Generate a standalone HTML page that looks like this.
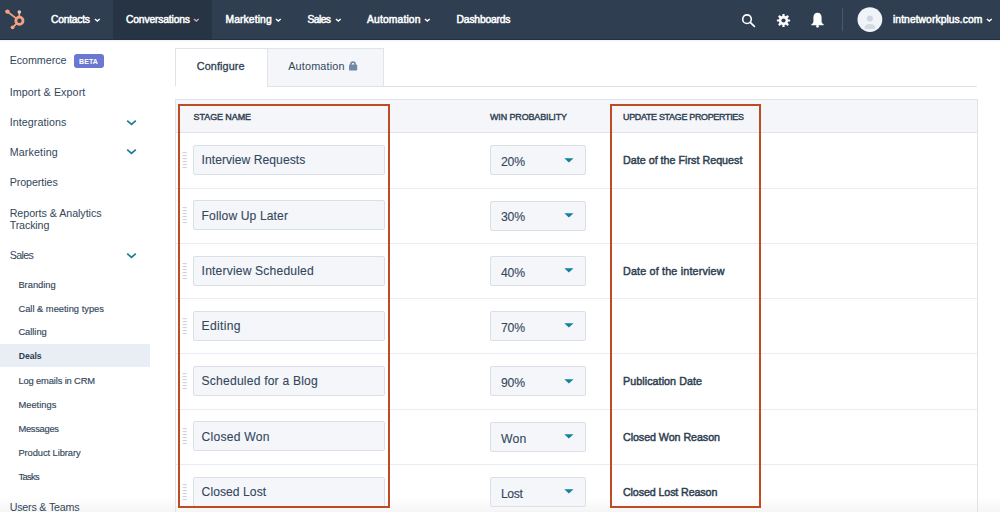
<!DOCTYPE html>
<html><head><meta charset="utf-8">
<style>
*{margin:0;padding:0;box-sizing:border-box}
html,body{width:1000px;height:512px;overflow:hidden;background:#fff;font-family:"Liberation Sans",sans-serif;color:#33475b;position:relative}
.a{position:absolute;white-space:nowrap}
.blk{position:absolute}
</style></head><body>
<div class="blk" style="left:0;top:497px;width:1000px;height:15px;background:linear-gradient(rgba(235,235,235,0),rgba(235,235,235,0.5))"></div>
<div class="blk" style="left:0;top:0;width:1000px;height:40px;background:#2f3f51"></div>
<div class="blk" style="left:113px;top:0;width:99px;height:40px;background:#273444"></div>
<div class="blk" style="left:0;top:39px;width:1000px;height:1px;background:#243140"></div>
<div class="blk" style="left:0;top:40px;width:1000px;height:2px;background:linear-gradient(rgba(0,0,0,0.06),rgba(0,0,0,0))"></div>
<svg class="blk" style="left:0;top:0" width="40" height="40" viewBox="0 0 40 40">
<g stroke="#f4a184" fill="none" stroke-linecap="round">
<circle cx="19.4" cy="20.8" r="3.6" stroke-width="2.8"/>
<line x1="16.6" y1="18.6" x2="7.5" y2="11.7" stroke-width="1.7"/>
<line x1="19.3" y1="16.6" x2="19.3" y2="12.2" stroke-width="1.7"/>
<line x1="16.8" y1="23.4" x2="12.7" y2="27.3" stroke-width="1.7"/>
</g>
<g fill="#f4a184"><circle cx="7.4" cy="11.6" r="2.2"/><circle cx="19.3" cy="12" r="1.8" fill="#f5c5ab"/><circle cx="12.6" cy="27.3" r="1.9"/></g>
</svg>
<div class="a" style="left:51.00px;top:14px;font-size:10.3px;line-height:11px;color:#fff;letter-spacing:-0.242px;-webkit-text-stroke:0.5px #fff;">Contacts</div>
<svg class="blk" style="left:94.2px;top:18px" width="7" height="5" viewBox="0 0 7 5"><path d="M0.9 0.9 L3.3 3.1 L5.7 0.9" stroke="#fff" stroke-width="1.35" fill="none"/></svg>
<div class="a" style="left:126.00px;top:14px;font-size:10.3px;line-height:11px;color:#fff;letter-spacing:-0.153px;-webkit-text-stroke:0.5px #fff;">Conversations</div>
<svg class="blk" style="left:193.3px;top:18px" width="7" height="5" viewBox="0 0 7 5"><path d="M0.9 0.9 L3.3 3.1 L5.7 0.9" stroke="#d4a6b6" stroke-width="1.35" fill="none"/></svg>
<div class="a" style="left:225.50px;top:14px;font-size:10.3px;line-height:11px;color:#fff;letter-spacing:0.121px;-webkit-text-stroke:0.5px #fff;">Marketing</div>
<svg class="blk" style="left:274.8px;top:18px" width="7" height="5" viewBox="0 0 7 5"><path d="M0.9 0.9 L3.3 3.1 L5.7 0.9" stroke="#fff" stroke-width="1.35" fill="none"/></svg>
<div class="a" style="left:307.50px;top:14px;font-size:10.3px;line-height:11px;color:#fff;letter-spacing:-0.564px;-webkit-text-stroke:0.5px #fff;">Sales</div>
<svg class="blk" style="left:334.5px;top:18px" width="7" height="5" viewBox="0 0 7 5"><path d="M0.9 0.9 L3.3 3.1 L5.7 0.9" stroke="#fff" stroke-width="1.35" fill="none"/></svg>
<div class="a" style="left:367.00px;top:14px;font-size:10.3px;line-height:11px;color:#fff;letter-spacing:0.152px;-webkit-text-stroke:0.5px #fff;">Automation</div>
<svg class="blk" style="left:423.8px;top:18px" width="7" height="5" viewBox="0 0 7 5"><path d="M0.9 0.9 L3.3 3.1 L5.7 0.9" stroke="#fff" stroke-width="1.35" fill="none"/></svg>
<div class="a" style="left:456.60px;top:14px;font-size:10.3px;line-height:11px;color:#fff;letter-spacing:-0.181px;-webkit-text-stroke:0.5px #fff;">Dashboards</div>
<svg class="blk" style="left:740px;top:13px" width="18" height="16" viewBox="0 0 18 16">
<circle cx="7" cy="6.2" r="4.3" stroke="#fff" stroke-width="1.6" fill="none"/>
<line x1="10.2" y1="9.4" x2="14.4" y2="13.4" stroke="#fff" stroke-width="1.7" stroke-linecap="round"/></svg>
<svg class="blk" style="left:775.8px;top:12.8px" width="16" height="16" viewBox="0 0 16 16">
<g fill="#fff">
<circle cx="7.5" cy="7.5" r="4.7"/>
<rect x="6.4" y="0.9" width="2.2" height="13.2" rx="0.4"/>
<rect x="6.4" y="0.9" width="2.2" height="13.2" rx="0.4" transform="rotate(45 7.5 7.5)"/>
<rect x="6.4" y="0.9" width="2.2" height="13.2" rx="0.4" transform="rotate(90 7.5 7.5)"/>
<rect x="6.4" y="0.9" width="2.2" height="13.2" rx="0.4" transform="rotate(135 7.5 7.5)"/>
</g><circle cx="7.5" cy="7.5" r="2.1" fill="#2f3f51"/></svg>
<svg class="blk" style="left:809px;top:11px" width="17" height="18" viewBox="0 0 17 18">
<path d="M4.4 6.5 C4.4 3.6 6 1.8 8.5 1.8 C11 1.8 12.6 3.6 12.6 6.5 L12.6 10.4 C12.6 11.8 13.6 12.6 14.6 13.2 L14.6 14.2 L2.4 14.2 L2.4 13.2 C3.4 12.6 4.4 11.8 4.4 10.4 Z" fill="#fff"/>
<circle cx="8.5" cy="15.3" r="1.4" fill="#fff"/></svg>
<div class="blk" style="left:842px;top:8px;width:1px;height:23px;background:#48596b"></div>
<svg class="blk" style="left:857px;top:7px" width="26" height="26" viewBox="0 0 26 26">
<circle cx="12.9" cy="12.6" r="12.4" fill="#f0f3f7"/>
<circle cx="12.9" cy="11.6" r="3.0" fill="#cdd5de"/>
<path d="M7.2 21.4 C7.6 18.6 9.8 17.1 12.9 17.1 C16 17.1 18.2 18.6 18.6 21.4 Q12.9 22.4 7.2 21.4 Z" fill="#d3dae2"/></svg>
<div class="a" style="left:893.00px;top:14px;font-size:10.3px;line-height:11px;color:#fff;letter-spacing:0.071px;-webkit-text-stroke:0.5px #fff;">intnetworkplus.com</div>
<svg class="blk" style="left:985.5px;top:18px" width="7" height="5" viewBox="0 0 7 5"><path d="M0.9 0.9 L3.3 3.1 L5.7 0.9" stroke="#fff" stroke-width="1.35" fill="none"/></svg>
<div class="a" style="left:9.70px;top:54px;font-size:10.72px;line-height:12px;color:#33475b;letter-spacing:-0.054px;">Ecommerce</div>
<div class="a" style="left:9.70px;top:86px;font-size:10.72px;line-height:12px;color:#33475b;letter-spacing:0.079px;">Import &amp; Export</div>
<div class="a" style="left:9.70px;top:116px;font-size:10.72px;line-height:12px;color:#33475b;letter-spacing:0.067px;">Integrations</div>
<div class="a" style="left:9.70px;top:146px;font-size:10.72px;line-height:12px;color:#33475b;letter-spacing:0.130px;">Marketing</div>
<div class="a" style="left:9.70px;top:176px;font-size:10.72px;line-height:12px;color:#33475b;letter-spacing:-0.087px;">Properties</div>
<div class="a" style="left:9.70px;top:207px;font-size:10.72px;line-height:12px;color:#33475b;letter-spacing:-0.058px;">Reports &amp; Analytics</div>
<div class="a" style="left:9.70px;top:219px;font-size:10.72px;line-height:12px;color:#33475b;letter-spacing:-0.148px;">Tracking</div>
<div class="a" style="left:9.70px;top:249px;font-size:10.72px;line-height:12px;color:#33475b;letter-spacing:-0.650px;">Sales</div>
<div class="a" style="left:9.70px;top:501px;font-size:10.72px;line-height:12px;color:#33475b;letter-spacing:-0.214px;">Users &amp; Teams</div>
<div class="blk" style="left:73.5px;top:54px;width:30.5px;height:14px;background:#6a78d1;border-radius:3px"></div>
<div class="a" style="left:79.00px;top:58px;font-size:7.0px;line-height:7px;color:#fff;font-weight:bold;letter-spacing:0.117px;">BETA</div>
<svg class="blk" style="left:125px;top:118.7px" width="13" height="8" viewBox="0 0 13 8"><path d="M2.2 1.6 L6.5 5.4 L10.8 1.6" stroke="#1d7f92" stroke-width="1.7" fill="none"/></svg>
<svg class="blk" style="left:125px;top:148.0px" width="13" height="8" viewBox="0 0 13 8"><path d="M2.2 1.6 L6.5 5.4 L10.8 1.6" stroke="#1d7f92" stroke-width="1.7" fill="none"/></svg>
<svg class="blk" style="left:125px;top:251.8px" width="13" height="8" viewBox="0 0 13 8"><path d="M2.2 1.6 L6.5 5.4 L10.8 1.6" stroke="#1d7f92" stroke-width="1.7" fill="none"/></svg>
<div class="blk" style="left:0;top:344.2px;width:150px;height:23.3px;background:#e9edf5"></div>
<div class="a" style="left:18.40px;top:280px;font-size:9.33px;line-height:10px;color:#33475b;letter-spacing:-0.001px;-webkit-text-stroke:0.15px #33475b;">Branding</div>
<div class="a" style="left:18.40px;top:304px;font-size:9.33px;line-height:10px;color:#33475b;letter-spacing:-0.001px;-webkit-text-stroke:0.15px #33475b;">Call &amp; meeting types</div>
<div class="a" style="left:18.40px;top:327px;font-size:9.33px;line-height:10px;color:#33475b;letter-spacing:-0.023px;-webkit-text-stroke:0.15px #33475b;">Calling</div>
<div class="a" style="left:18.40px;top:376px;font-size:9.33px;line-height:10px;color:#33475b;letter-spacing:-0.132px;-webkit-text-stroke:0.15px #33475b;">Log emails in CRM</div>
<div class="a" style="left:18.40px;top:400px;font-size:9.33px;line-height:10px;color:#33475b;letter-spacing:0.019px;-webkit-text-stroke:0.15px #33475b;">Meetings</div>
<div class="a" style="left:18.40px;top:424px;font-size:9.33px;line-height:10px;color:#33475b;letter-spacing:-0.275px;-webkit-text-stroke:0.15px #33475b;">Messages</div>
<div class="a" style="left:18.40px;top:448px;font-size:9.33px;line-height:10px;color:#33475b;letter-spacing:-0.074px;-webkit-text-stroke:0.15px #33475b;">Product Library</div>
<div class="a" style="left:18.40px;top:472px;font-size:9.33px;line-height:10px;color:#33475b;letter-spacing:-0.619px;-webkit-text-stroke:0.15px #33475b;">Tasks</div>
<div class="a" style="left:18.70px;top:351px;font-size:8.66px;line-height:10px;color:#2d3e50;font-weight:bold;letter-spacing:-0.054px;">Deals</div>
<div class="blk" style="left:175px;top:48px;width:93px;height:38px;background:#fff;border:1px solid #e0e4e9;border-bottom:none"></div>
<div class="blk" style="left:267px;top:48px;width:117px;height:38px;background:#f4f6f9;border:1px solid #e0e4e9;border-bottom:none"></div>
<div class="blk" style="left:267px;top:85.5px;width:710px;height:1px;background:#e0e4e9"></div>
<div class="a" style="left:196.80px;top:60px;font-size:10.87px;line-height:12px;color:#2d3e50;letter-spacing:0.076px;-webkit-text-stroke:0.3px #2d3e50;">Configure</div>
<div class="a" style="left:288.20px;top:60px;font-size:10.87px;line-height:12px;color:#33475b;letter-spacing:0.154px;">Automation</div>
<svg class="blk" style="left:348.3px;top:60px" width="10" height="11" viewBox="0 0 10 11">
<path d="M2.9 5 L2.9 3.8 C2.9 1.5 7.1 1.5 7.1 3.8 L7.1 5" stroke="#7089a6" stroke-width="1.6" fill="none"/>
<rect x="1" y="4.5" width="8.2" height="6" rx="0.9" fill="#7089a6"/></svg>
<div class="blk" style="left:175px;top:99px;width:803px;height:420px;border:1px solid #e0e4e9"></div>
<div class="blk" style="left:176px;top:100px;width:801px;height:32.5px;background:#f5f6fa;border-bottom:1px solid #e0e4e9"></div>
<div class="a" style="left:193.60px;top:112px;font-size:8.93px;line-height:10px;color:#2d3e50;letter-spacing:-0.049px;-webkit-text-stroke:0.4px #2d3e50;">STAGE NAME</div>
<div class="a" style="left:490.00px;top:112px;font-size:8.93px;line-height:10px;color:#2d3e50;letter-spacing:-0.098px;-webkit-text-stroke:0.4px #2d3e50;">WIN PROBABILITY</div>
<div class="a" style="left:623.00px;top:112px;font-size:8.93px;line-height:10px;color:#2d3e50;letter-spacing:-0.294px;-webkit-text-stroke:0.4px #2d3e50;">UPDATE STAGE PROPERTIES</div>
<div class="blk" style="left:176px;top:187.50px;width:801px;height:1px;background:#e9edf1"></div>
<div class="blk" style="left:193px;top:145.00px;width:191.5px;height:30px;background:#f4f6fa;border:1px solid #dbe0e7;border-radius:2px"></div>
<div class="blk" style="left:490px;top:145.30px;width:96px;height:30px;background:#f4f6fa;border:1px solid #dbe0e7;border-radius:2px"></div>
<div class="a" style="left:201.60px;top:153px;font-size:12.12px;line-height:14px;color:#33475b;letter-spacing:0.038px;-webkit-text-stroke:0.1px #33475b;">Interview Requests</div>
<div class="a" style="left:500.90px;top:155px;font-size:12.22px;line-height:14px;color:#33475b;letter-spacing:-0.166px;-webkit-text-stroke:0.1px #33475b;">20%</div>
<svg class="blk" style="left:564px;top:157.60px" width="10" height="6" viewBox="0 0 10 6"><path d="M0.3 0.2 L9.5 0.2 L4.9 4.5 Z" fill="#12829a"/></svg>
<svg class="blk" style="left:181.5px;top:152.00px" width="6" height="17" viewBox="0 0 6 17"><g fill="#cad2db"><rect x="0.6" y="0.10" width="4.2" height="1.1"/><rect x="0.6" y="3.08" width="4.2" height="1.1"/><rect x="0.6" y="6.06" width="4.2" height="1.1"/><rect x="0.6" y="9.04" width="4.2" height="1.1"/><rect x="0.6" y="12.02" width="4.2" height="1.1"/><rect x="0.6" y="15.00" width="4.2" height="1.1"/></g></svg>
<div class="a" style="left:623.00px;top:154px;font-size:10.74px;line-height:12px;color:#2d3e50;letter-spacing:0.003px;-webkit-text-stroke:0.45px #2d3e50;">Date of the First Request</div>
<div class="blk" style="left:176px;top:242.78px;width:801px;height:1px;background:#e9edf1"></div>
<div class="blk" style="left:193px;top:200.28px;width:191.5px;height:30px;background:#f4f6fa;border:1px solid #dbe0e7;border-radius:2px"></div>
<div class="blk" style="left:490px;top:200.58px;width:96px;height:30px;background:#f4f6fa;border:1px solid #dbe0e7;border-radius:2px"></div>
<div class="a" style="left:201.60px;top:209px;font-size:12.12px;line-height:14px;color:#33475b;letter-spacing:0.109px;-webkit-text-stroke:0.1px #33475b;">Follow Up Later</div>
<div class="a" style="left:500.90px;top:210px;font-size:12.22px;line-height:14px;color:#33475b;letter-spacing:-0.166px;-webkit-text-stroke:0.1px #33475b;">30%</div>
<svg class="blk" style="left:564px;top:212.88px" width="10" height="6" viewBox="0 0 10 6"><path d="M0.3 0.2 L9.5 0.2 L4.9 4.5 Z" fill="#12829a"/></svg>
<svg class="blk" style="left:181.5px;top:207.28px" width="6" height="17" viewBox="0 0 6 17"><g fill="#cad2db"><rect x="0.6" y="0.10" width="4.2" height="1.1"/><rect x="0.6" y="3.08" width="4.2" height="1.1"/><rect x="0.6" y="6.06" width="4.2" height="1.1"/><rect x="0.6" y="9.04" width="4.2" height="1.1"/><rect x="0.6" y="12.02" width="4.2" height="1.1"/><rect x="0.6" y="15.00" width="4.2" height="1.1"/></g></svg>
<div class="blk" style="left:176px;top:298.06px;width:801px;height:1px;background:#e9edf1"></div>
<div class="blk" style="left:193px;top:255.56px;width:191.5px;height:30px;background:#f4f6fa;border:1px solid #dbe0e7;border-radius:2px"></div>
<div class="blk" style="left:490px;top:255.86px;width:96px;height:30px;background:#f4f6fa;border:1px solid #dbe0e7;border-radius:2px"></div>
<div class="a" style="left:201.60px;top:264px;font-size:12.12px;line-height:14px;color:#33475b;letter-spacing:0.171px;-webkit-text-stroke:0.1px #33475b;">Interview Scheduled</div>
<div class="a" style="left:500.90px;top:266px;font-size:12.22px;line-height:14px;color:#33475b;letter-spacing:-0.166px;-webkit-text-stroke:0.1px #33475b;">40%</div>
<svg class="blk" style="left:564px;top:268.16px" width="10" height="6" viewBox="0 0 10 6"><path d="M0.3 0.2 L9.5 0.2 L4.9 4.5 Z" fill="#12829a"/></svg>
<svg class="blk" style="left:181.5px;top:262.56px" width="6" height="17" viewBox="0 0 6 17"><g fill="#cad2db"><rect x="0.6" y="0.10" width="4.2" height="1.1"/><rect x="0.6" y="3.08" width="4.2" height="1.1"/><rect x="0.6" y="6.06" width="4.2" height="1.1"/><rect x="0.6" y="9.04" width="4.2" height="1.1"/><rect x="0.6" y="12.02" width="4.2" height="1.1"/><rect x="0.6" y="15.00" width="4.2" height="1.1"/></g></svg>
<div class="a" style="left:623.00px;top:265px;font-size:10.74px;line-height:12px;color:#2d3e50;letter-spacing:0.183px;-webkit-text-stroke:0.45px #2d3e50;">Date of the interview</div>
<div class="blk" style="left:176px;top:353.34px;width:801px;height:1px;background:#e9edf1"></div>
<div class="blk" style="left:193px;top:310.84px;width:191.5px;height:30px;background:#f4f6fa;border:1px solid #dbe0e7;border-radius:2px"></div>
<div class="blk" style="left:490px;top:311.14px;width:96px;height:30px;background:#f4f6fa;border:1px solid #dbe0e7;border-radius:2px"></div>
<div class="a" style="left:201.60px;top:319px;font-size:12.12px;line-height:14px;color:#33475b;letter-spacing:0.317px;-webkit-text-stroke:0.1px #33475b;">Editing</div>
<div class="a" style="left:500.90px;top:321px;font-size:12.22px;line-height:14px;color:#33475b;letter-spacing:-0.166px;-webkit-text-stroke:0.1px #33475b;">70%</div>
<svg class="blk" style="left:564px;top:323.44px" width="10" height="6" viewBox="0 0 10 6"><path d="M0.3 0.2 L9.5 0.2 L4.9 4.5 Z" fill="#12829a"/></svg>
<svg class="blk" style="left:181.5px;top:317.84px" width="6" height="17" viewBox="0 0 6 17"><g fill="#cad2db"><rect x="0.6" y="0.10" width="4.2" height="1.1"/><rect x="0.6" y="3.08" width="4.2" height="1.1"/><rect x="0.6" y="6.06" width="4.2" height="1.1"/><rect x="0.6" y="9.04" width="4.2" height="1.1"/><rect x="0.6" y="12.02" width="4.2" height="1.1"/><rect x="0.6" y="15.00" width="4.2" height="1.1"/></g></svg>
<div class="blk" style="left:176px;top:408.62px;width:801px;height:1px;background:#e9edf1"></div>
<div class="blk" style="left:193px;top:366.12px;width:191.5px;height:30px;background:#f4f6fa;border:1px solid #dbe0e7;border-radius:2px"></div>
<div class="blk" style="left:490px;top:366.42px;width:96px;height:30px;background:#f4f6fa;border:1px solid #dbe0e7;border-radius:2px"></div>
<div class="a" style="left:201.60px;top:374px;font-size:12.12px;line-height:14px;color:#33475b;letter-spacing:0.194px;-webkit-text-stroke:0.1px #33475b;">Scheduled for a Blog</div>
<div class="a" style="left:500.90px;top:376px;font-size:12.22px;line-height:14px;color:#33475b;letter-spacing:-0.166px;-webkit-text-stroke:0.1px #33475b;">90%</div>
<svg class="blk" style="left:564px;top:378.72px" width="10" height="6" viewBox="0 0 10 6"><path d="M0.3 0.2 L9.5 0.2 L4.9 4.5 Z" fill="#12829a"/></svg>
<svg class="blk" style="left:181.5px;top:373.12px" width="6" height="17" viewBox="0 0 6 17"><g fill="#cad2db"><rect x="0.6" y="0.10" width="4.2" height="1.1"/><rect x="0.6" y="3.08" width="4.2" height="1.1"/><rect x="0.6" y="6.06" width="4.2" height="1.1"/><rect x="0.6" y="9.04" width="4.2" height="1.1"/><rect x="0.6" y="12.02" width="4.2" height="1.1"/><rect x="0.6" y="15.00" width="4.2" height="1.1"/></g></svg>
<div class="a" style="left:623.00px;top:375px;font-size:10.74px;line-height:12px;color:#2d3e50;letter-spacing:0.055px;-webkit-text-stroke:0.45px #2d3e50;">Publication Date</div>
<div class="blk" style="left:176px;top:463.90px;width:801px;height:1px;background:#e9edf1"></div>
<div class="blk" style="left:193px;top:421.40px;width:191.5px;height:30px;background:#f4f6fa;border:1px solid #dbe0e7;border-radius:2px"></div>
<div class="blk" style="left:490px;top:421.70px;width:96px;height:30px;background:#f4f6fa;border:1px solid #dbe0e7;border-radius:2px"></div>
<div class="a" style="left:201.60px;top:430px;font-size:12.12px;line-height:14px;color:#33475b;letter-spacing:0.241px;-webkit-text-stroke:0.1px #33475b;">Closed Won</div>
<div class="a" style="left:500.90px;top:432px;font-size:12.22px;line-height:14px;color:#33475b;letter-spacing:0.290px;-webkit-text-stroke:0.1px #33475b;">Won</div>
<svg class="blk" style="left:564px;top:434.00px" width="10" height="6" viewBox="0 0 10 6"><path d="M0.3 0.2 L9.5 0.2 L4.9 4.5 Z" fill="#12829a"/></svg>
<svg class="blk" style="left:181.5px;top:428.40px" width="6" height="17" viewBox="0 0 6 17"><g fill="#cad2db"><rect x="0.6" y="0.10" width="4.2" height="1.1"/><rect x="0.6" y="3.08" width="4.2" height="1.1"/><rect x="0.6" y="6.06" width="4.2" height="1.1"/><rect x="0.6" y="9.04" width="4.2" height="1.1"/><rect x="0.6" y="12.02" width="4.2" height="1.1"/><rect x="0.6" y="15.00" width="4.2" height="1.1"/></g></svg>
<div class="a" style="left:623.00px;top:431px;font-size:10.74px;line-height:12px;color:#2d3e50;letter-spacing:-0.079px;-webkit-text-stroke:0.45px #2d3e50;">Closed Won Reason</div>
<div class="blk" style="left:193px;top:476.68px;width:191.5px;height:30px;background:#f4f6fa;border:1px solid #dbe0e7;border-radius:2px"></div>
<div class="blk" style="left:490px;top:476.98px;width:96px;height:30px;background:#f4f6fa;border:1px solid #dbe0e7;border-radius:2px"></div>
<div class="a" style="left:201.60px;top:485px;font-size:12.12px;line-height:14px;color:#33475b;letter-spacing:0.059px;-webkit-text-stroke:0.1px #33475b;">Closed Lost</div>
<div class="a" style="left:500.90px;top:487px;font-size:12.22px;line-height:14px;color:#33475b;letter-spacing:-0.329px;-webkit-text-stroke:0.1px #33475b;">Lost</div>
<svg class="blk" style="left:564px;top:489.28px" width="10" height="6" viewBox="0 0 10 6"><path d="M0.3 0.2 L9.5 0.2 L4.9 4.5 Z" fill="#12829a"/></svg>
<svg class="blk" style="left:181.5px;top:483.68px" width="6" height="17" viewBox="0 0 6 17"><g fill="#cad2db"><rect x="0.6" y="0.10" width="4.2" height="1.1"/><rect x="0.6" y="3.08" width="4.2" height="1.1"/><rect x="0.6" y="6.06" width="4.2" height="1.1"/><rect x="0.6" y="9.04" width="4.2" height="1.1"/><rect x="0.6" y="12.02" width="4.2" height="1.1"/><rect x="0.6" y="15.00" width="4.2" height="1.1"/></g></svg>
<div class="a" style="left:623.00px;top:486px;font-size:10.74px;line-height:12px;color:#2d3e50;letter-spacing:-0.133px;-webkit-text-stroke:0.45px #2d3e50;">Closed Lost Reason</div>
<div class="blk" style="left:178px;top:104px;width:212px;height:404px;border:2px solid #c04a24"></div>
<div class="blk" style="left:610px;top:104px;width:151px;height:404px;border:2px solid #c04a24"></div>
</body></html>
